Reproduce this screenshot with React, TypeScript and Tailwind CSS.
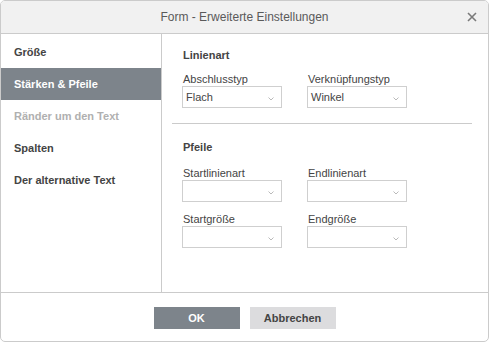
import React from "react";

const Chevron = () => (
  <svg width="6" height="4" viewBox="0 0 6 4" className="absolute right-[7px] top-[10px]">
    <path d="M0.5 0.5 L3 3 L5.5 0.5" fill="none" stroke="#a8a8a8" strokeWidth="0.8" />
  </svg>
);

const Select = ({ value }: { value?: string }) => (
  <div className="relative w-[100px] h-[22px] border border-[#cfcfcf] bg-white">
    {value && (
      <span className="absolute left-[3px] top-[3px] text-[11px] leading-[14px] text-[#444]">{value}</span>
    )}
    <Chevron />
  </div>
);

const Field = ({ label, value, className = "" }: { label: string; value?: string; className?: string }) => (
  <div className={"flex flex-col w-[100px] " + className}>
    <div className="text-[11px] leading-[14px] text-[#444] pl-[1px]">{label}</div>
    <Select value={value} />
  </div>
);

export default function App() {
  const items = [
    { t: "Größe", s: "normal" },
    { t: "Stärken & Pfeile", s: "active" },
    { t: "Ränder um den Text", s: "disabled" },
    { t: "Spalten", s: "normal" },
    { t: "Der alternative Text", s: "normal" },
  ];
  return (
    <div
      className="w-[489px] h-[342px] bg-white border border-[#cbcbcb] rounded-[5px] flex flex-col overflow-hidden"
      style={{ fontFamily: '"Liberation Sans", Arial, sans-serif' }}
    >
      <div className="relative h-[33px] shrink-0 bg-[#f1f1f1] border-b border-[#cbcbcb] flex items-center justify-center">
        <span className="text-[12px] text-[#5a5a5a]">Form - Erweiterte Einstellungen</span>
        <svg width="10" height="10" viewBox="0 0 10 10" className="absolute left-[466px] top-[11px]">
          <path d="M1 1 L9 9 M9 1 L1 9" stroke="#7a7a7a" strokeWidth="1.6" />
        </svg>
      </div>
      <div className="flex flex-1 min-h-0">
        <div className="w-[161px] shrink-0 border-r border-[#cbcbcb] pt-[2px]">
          {items.map((it) => (
            <div
              key={it.t}
              className={
                "h-[32px] flex items-center pl-[13px] text-[11px] font-bold " +
                (it.s === "active"
                  ? "bg-[#7d848b] text-white"
                  : it.s === "disabled"
                  ? "text-[#b0b0b0]"
                  : "text-[#444]")
              }
            >
              {it.t}
            </div>
          ))}
        </div>
        <div className="flex-1 flex flex-col pt-[14px]">
          <div className="pl-[20px] text-[11px] leading-[14px] font-bold text-[#444]">
            <span className="pl-[1px]">Linienart</span>
          </div>
          <div className="pl-[20px] mt-[10px] flex gap-[25px]">
            <Field label="Abschlusstyp" value="Flach" />
            <Field label="Verknüpfungstyp" value="Winkel" />
          </div>
          <div className="ml-[10px] w-[300px] h-px bg-[#cbcbcb] mt-[15px]" />
          <div className="pl-[20px] mt-[16px] text-[11px] leading-[14px] font-bold text-[#444]">
            <span className="pl-[1px]">Pfeile</span>
          </div>
          <div className="pl-[20px] mt-[12px] flex gap-[25px]">
            <Field label="Startlinienart" />
            <Field label="Endlinienart" />
          </div>
          <div className="pl-[20px] mt-[10px] flex gap-[25px]">
            <Field label="Startgröße" />
            <Field label="Endgröße" />
          </div>
        </div>
      </div>
      <div className="h-[49px] shrink-0 border-t border-[#cbcbcb] flex justify-center pt-[14px] gap-[10px]">
        <button className="w-[86px] h-[22px] bg-[#7d848b] text-white text-[11px] font-bold">OK</button>
        <button className="w-[86px] h-[22px] bg-[#dcdcde] text-[#444] text-[11px] font-bold">Abbrechen</button>
      </div>
    </div>
  );
}
